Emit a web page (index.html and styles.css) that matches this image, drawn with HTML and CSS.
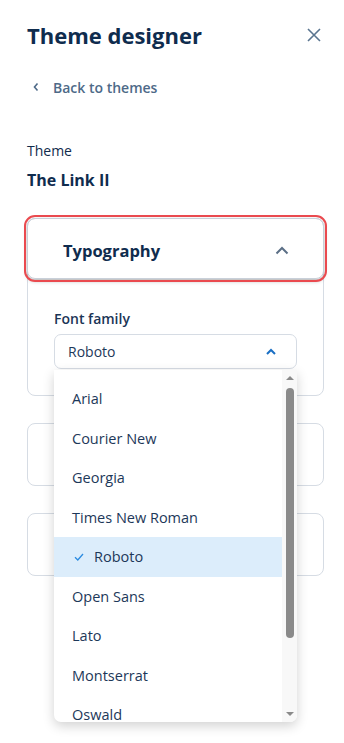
FILE: index.html
```html
<!DOCTYPE html>
<html lang="en">
<head>
    <meta charset="UTF-8">
    <meta name="viewport" content="width=device-width, initial-scale=1.0">
    <title>Theme designer</title>
    <link rel="stylesheet" href="styles.css">
</head>
<body>
    <div class="panel">
        <div class="top">
            <h1>Theme designer</h1>
            <span class="close">
                <svg width="14" height="14" viewBox="0 0 14 14"><path d="M1 1 L13 13 M13 1 L1 13" stroke="#5a7590" stroke-width="1.6" fill="none"/></svg>
            </span>
        </div>

        <a class="back" href="#">
            <svg width="8" height="10" viewBox="0 0 8 10"><path d="M5.5 1.5 L2.5 5 L5.5 8.5" stroke="#4e6a88" stroke-width="1.6" fill="none"/></svg>
            Back to themes
        </a>

        <div class="theme-label">Theme</div>
        <div class="theme-name">The Link II</div>

        <div class="sections">
            <!-- Open section -->
            <div class="section">
                <div class="section-head">
                    <span>Typography</span>
                    <svg width="14" height="9" viewBox="0 0 14 9"><path d="M1.5 7.5 L7 2 L12.5 7.5" stroke="#5b6f86" stroke-width="2" fill="none"/></svg>
                </div>
                <div class="section-body">
                    <div class="field-label">Font family</div>
                    <div class="select-wrap">
                        <div class="select">
                            <span>Roboto</span>
                            <svg width="10" height="7" viewBox="0 0 10 7"><path d="M1 6 L5 2 L9 6" stroke="#1a6fc4" stroke-width="2" fill="none"/></svg>
                        </div>

                        <!-- Open dropdown -->
                        <div class="dropdown">
                            <ul class="options">
                                <li>Arial</li>
                                <li>Courier New</li>
                                <li>Georgia</li>
                                <li>Times New Roman</li>
                                <li class="selected">
                                    <svg width="10" height="8" viewBox="0 0 10 8"><path d="M1 4.2 L3.8 7 L9 1" stroke="#2b8be0" stroke-width="1.3" fill="none"/></svg>
                                    Roboto
                                </li>
                                <li>Open Sans</li>
                                <li>Lato</li>
                                <li>Montserrat</li>
                                <li>Oswald</li>
                            </ul>
                            <div class="scrollbar">
                                <span class="arrow up"></span>
                                <span class="thumb"></span>
                                <span class="arrow down"></span>
                            </div>
                        </div>
                    </div>
                </div>
            </div>
            <div class="section closed"></div>
            <div class="section closed"></div>
        </div>
    </div>
</body>
</html>
```

FILE: styles.css
```css
body {
    margin: 0;
    font-family: 'Open Sans', 'Noto Sans', sans-serif;
    background: #ffffff;
    color: #102b4c;
}
.panel {
    width: 344px;
    min-height: 743px;
    padding: 20px 20px 0 27px;
    box-sizing: border-box;
}
.top {
    display: flex;
    justify-content: space-between;
    align-items: center;
    height: 30px;
}
h1 {
    margin: 0;
    font-size: 22px;
    line-height: 30px;
    font-weight: 700;
    color: #0f2c4e;
}
.close {
    display: flex;
    margin-right: 3px;
}
.back {
    display: flex;
    align-items: center;
    gap: 13px;
    margin-top: 27px;
    height: 20px;
    padding-left: 5px;
    font-size: 14px;
    font-weight: 600;
    color: #4e6a88;
    text-decoration: none;
}
.theme-label {
    margin-top: 44px;
    font-size: 14px;
    line-height: 20px;
}
.theme-name {
    margin-top: 8px;
    font-size: 16px;
    line-height: 22px;
    font-weight: 700;
    color: #0f2c4e;
}
.sections {
    display: flex;
    flex-direction: column;
    gap: 27px;
    margin-top: 27px;
}
.section {
    border: 1px solid #d6dce4;
    border-radius: 8px;
}
.section.closed {
    height: 61px;
}
.section-head {
    display: flex;
    justify-content: space-between;
    align-items: center;
    height: 61px;
    margin: -1px -1px 0;
    padding: 3px 34px 0 35px;
    box-sizing: border-box;
    border: 1px solid #c9d0d9;
    border-radius: 8px;
    box-shadow: 0 2px 4px rgba(0, 0, 0, 0.3);
    outline: 2px solid #ea4a4f;
    outline-offset: 1px;
    font-size: 16.5px;
    font-weight: 700;
    color: #0f2c4e;
}
.section-body {
    padding: 30px 26px 26px;
}
.field-label {
    font-size: 14px;
    font-weight: 600;
    line-height: 20px;
    color: #1b3556;
}
.select-wrap {
    position: relative;
    margin-top: 5px;
}
.select {
    display: flex;
    justify-content: space-between;
    align-items: center;
    height: 35px;
    padding: 0 20px 0 13px;
    box-sizing: border-box;
    border: 1px solid #d6dce4;
    border-radius: 7px;
    font-size: 14px;
    color: #1d3859;
}
/* dropdown sits on top of the cards below */
.dropdown {
    position: absolute;
    top: 36px;
    left: 0;
    width: 100%;
    height: 352px;
    display: flex;
    background: #fff;
    border-radius: 0 0 7px 7px;
    box-shadow: 0 4px 12px rgba(0, 0, 0, 0.18);
    overflow: hidden;
    z-index: 2;
}
.options {
    flex: 1;
    list-style: none;
    margin: 0;
    padding: 9px 0 0;
}
.options li {
    display: flex;
    align-items: center;
    gap: 10px;
    height: 39.5px;
    padding-left: 18px;
    font-size: 14.5px;
    color: #1d3859;
}
.options li.selected {
    background: #dcedfb;
    padding-left: 20px;
}
.scrollbar {
    width: 15px;
    display: flex;
    flex-direction: column;
    align-items: center;
    background: #f8f8f8;
}
.arrow {
    width: 0;
    height: 0;
    border-left: 4px solid transparent;
    border-right: 4px solid transparent;
}
.arrow.up {
    margin-top: 6px;
    border-bottom: 4px solid #8a8a8a;
}
.arrow.down {
    margin-top: auto;
    margin-bottom: 6px;
    border-top: 4px solid #8a8a8a;
}
.thumb {
    width: 8px;
    height: 250px;
    margin-top: 8px;
    border-radius: 4px;
    background: #8a8a8a;
}
```
